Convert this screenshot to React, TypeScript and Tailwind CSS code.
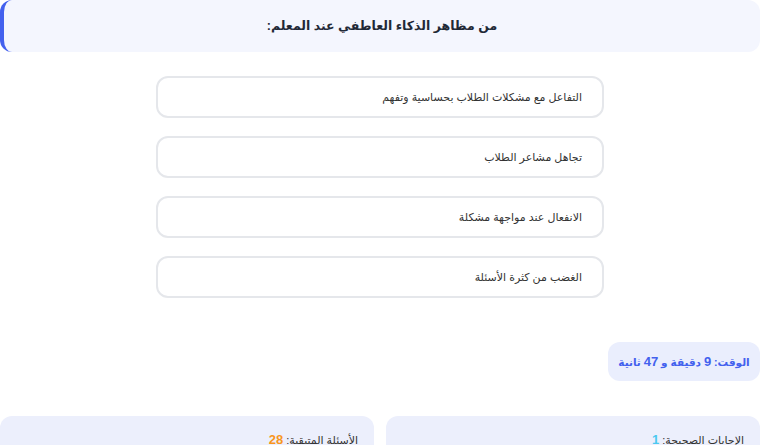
import React from 'react'

const options = [
  'التفاعل مع مشكلات الطلاب بحساسية وتفهم',
  'تجاهل مشاعر الطلاب',
  'الانفعال عند مواجهة مشكلة',
  'الغضب من كثرة الأسئلة',
]

export default function App() {
  return (
    <div className="min-h-screen w-[770px] bg-white" style={{ fontFamily: '"Liberation Sans", "DejaVu Sans", Arial, sans-serif' }}>
      <div dir="rtl" className="w-[760px]">
        {/* question header */}
        <div className="flex h-[52px] items-center justify-center rounded-xl border-l-4 border-[#4361ee] bg-[#f4f6fe]">
          <h2 className="text-[12.5px] font-bold text-[#1f2937]">من مظاهر الذكاء العاطفي عند المعلم:</h2>
        </div>

        {/* options */}
        <div className="mx-auto mt-6 flex w-[448px] flex-col gap-[18px]">
          {options.map((opt) => (
            <div key={opt} className="flex h-[42px] items-center rounded-xl border-2 border-[#e5e7eb] bg-white px-[20px] text-[11px] text-[#333]">
              {opt}
            </div>
          ))}
        </div>

        {/* timer */}
        <div className="mt-[44px] flex">
          <div className="flex h-[39px] w-[152px] items-center justify-center rounded-xl bg-[#eaeefd] text-[10.5px] font-bold text-[#4361ee]">
            <span>
              الوقت: <span className="text-[13px]">9</span> دقيقة و <span className="text-[13px]">47</span> ثانية
            </span>
          </div>
        </div>

        {/* stats */}
        <div className="mt-[35px] grid grid-cols-2 gap-3">
          <div className="rounded-xl bg-[#eceffc] px-4 py-[14px] text-[11px] text-[#333]">
            الإجابات الصحيحة: <span className="text-[13px] font-bold text-[#4cc9f0]">1</span>
          </div>
          <div className="rounded-xl bg-[#eceffc] px-4 py-[14px] text-[11px] text-[#333]">
            الأسئلة المتبقية: <span className="text-[13px] font-bold text-[#f8961e]">28</span>
          </div>
        </div>
      </div>
    </div>
  )
}
